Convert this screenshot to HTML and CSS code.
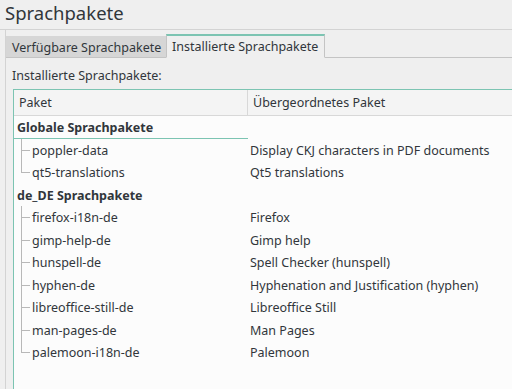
FILE: index.html
```html
<!DOCTYPE html>
<html lang="de">
<head>
<meta charset="utf-8">
<link rel="stylesheet" href="styles.css">
</head>
<body>
<div class="title">Sprachpakete</div>
<div class="frame">
  <div class="tabs">
    <div class="tab">Verfügbare Sprachpakete</div>
    <div class="tab active">Installierte Sprachpakete</div>
  </div>
  <div class="pane">
    <div class="label">Installierte Sprachpakete:</div>
    <div class="tree">
      <div class="row head"><div class="c1">Paket</div><div class="c2">Übergeordnetes Paket</div></div>
      <div class="row group focus"><div class="c1">Globale Sprachpakete</div><div class="c2"></div></div>
      <div class="row child"><div class="c1">poppler-data</div><div class="c2">Display CKJ characters in PDF documents</div></div>
      <div class="row child last"><div class="c1">qt5-translations</div><div class="c2">Qt5 translations</div></div>
      <div class="row group"><div class="c1">de_DE Sprachpakete</div><div class="c2"></div></div>
      <div class="row child"><div class="c1">firefox-i18n-de</div><div class="c2">Firefox</div></div>
      <div class="row child"><div class="c1">gimp-help-de</div><div class="c2">Gimp help</div></div>
      <div class="row child"><div class="c1">hunspell-de</div><div class="c2">Spell Checker (hunspell)</div></div>
      <div class="row child"><div class="c1">hyphen-de</div><div class="c2">Hyphenation and Justification (hyphen)</div></div>
      <div class="row child"><div class="c1">libreoffice-still-de</div><div class="c2">Libreoffice Still</div></div>
      <div class="row child"><div class="c1">man-pages-de</div><div class="c2">Man Pages</div></div>
      <div class="row child last"><div class="c1">palemoon-i18n-de</div><div class="c2">Palemoon</div></div>
    </div>
  </div>
</div>
</body>
</html>
```

FILE: styles.css
```css
* { box-sizing: border-box; }
html, body { margin: 0; height: 100%; }
body {
  background: #efefef;
  font-family: "Noto Sans", "Open Sans", sans-serif;
  font-size: 12.5px;
  color: #31363b;
  overflow: hidden;
  display: flex;
  flex-direction: column;
}
.title {
  height: 30px;
  padding-left: 5px;
  font-size: 18.5px;
  line-height: 26px;
  border-bottom: 1px solid #d3d3d3;
  flex: none;
}
.frame {
  margin-left: 5px;
  border-left: 1px solid #d3d3d3;
  flex: 1;
  display: flex;
  flex-direction: column;
}
.tabs {
  height: 28px;
  display: flex;
  align-items: flex-end;
  flex: none;
  position: relative;
  z-index: 1;
}
.tab {
  height: 22px;
  line-height: 23px;
  padding: 0 6px;
  width: 160px;
  background: #d6d6d6;
  border-bottom: 1px solid #c4c4c4;
  white-space: nowrap;
}
.tab.active {
  width: 159px;
  height: 24px;
  line-height: 22px;
  background: #efefef;
  border-top: 2px solid #7cc4b2;
  border-left: 1px solid #c4c4c4;
  border-right: 1px solid #c4c4c4;
  border-bottom: 1px solid #efefef;
  padding-left: 5px;
}
.pane {
  flex: 1;
  border-top: 1px solid #c4c4c4;
  margin-top: -1px;
  display: flex;
  flex-direction: column;
}
.label {
  padding-left: 6px;
  margin-top: 9px;
  line-height: 18px;
  height: 18px;
}
.tree {
  margin-top: 4px;
  margin-left: 7px;
  margin-right: -20px;
  margin-bottom: -12px;
  flex: 1;
  border: 1px solid #7cc4b2;
  background: #fcfcfc;
}
.row {
  display: grid;
  grid-template-columns: 234px 1fr;
  height: 22.5px;
  white-space: nowrap;
}
.row > div {
  padding-top: 3px;
  line-height: 18.5px;
}
.row.head {
  height: 26px;
  background: #f4f4f4;
  border-bottom: 1px solid #d8d8d8;
}
.row.head > div { padding-top: 2px; line-height: 22px; }
.head .c1 { padding-left: 5px; border-right: 1px solid #d8d8d8; }
.head .c2 { padding-left: 5px; }
.group .c1 { font-weight: bold; padding-left: 3px; }
.focus .c1 { border-bottom: 1px solid #7cc4b2; }
.c2 { padding-left: 2px; }
.child .c1 {
  padding-left: 18px;
  position: relative;
}
.child .c1::before {
  content: "";
  position: absolute;
  left: 7px;
  top: 0;
  bottom: 0;
  border-left: 1px solid #b8b8b8;
}
.child.last .c1::before { bottom: 11px; }
.child .c1::after {
  content: "";
  position: absolute;
  left: 7px;
  width: 9px;
  top: 11px;
  border-top: 1px solid #b8b8b8;
}
```
